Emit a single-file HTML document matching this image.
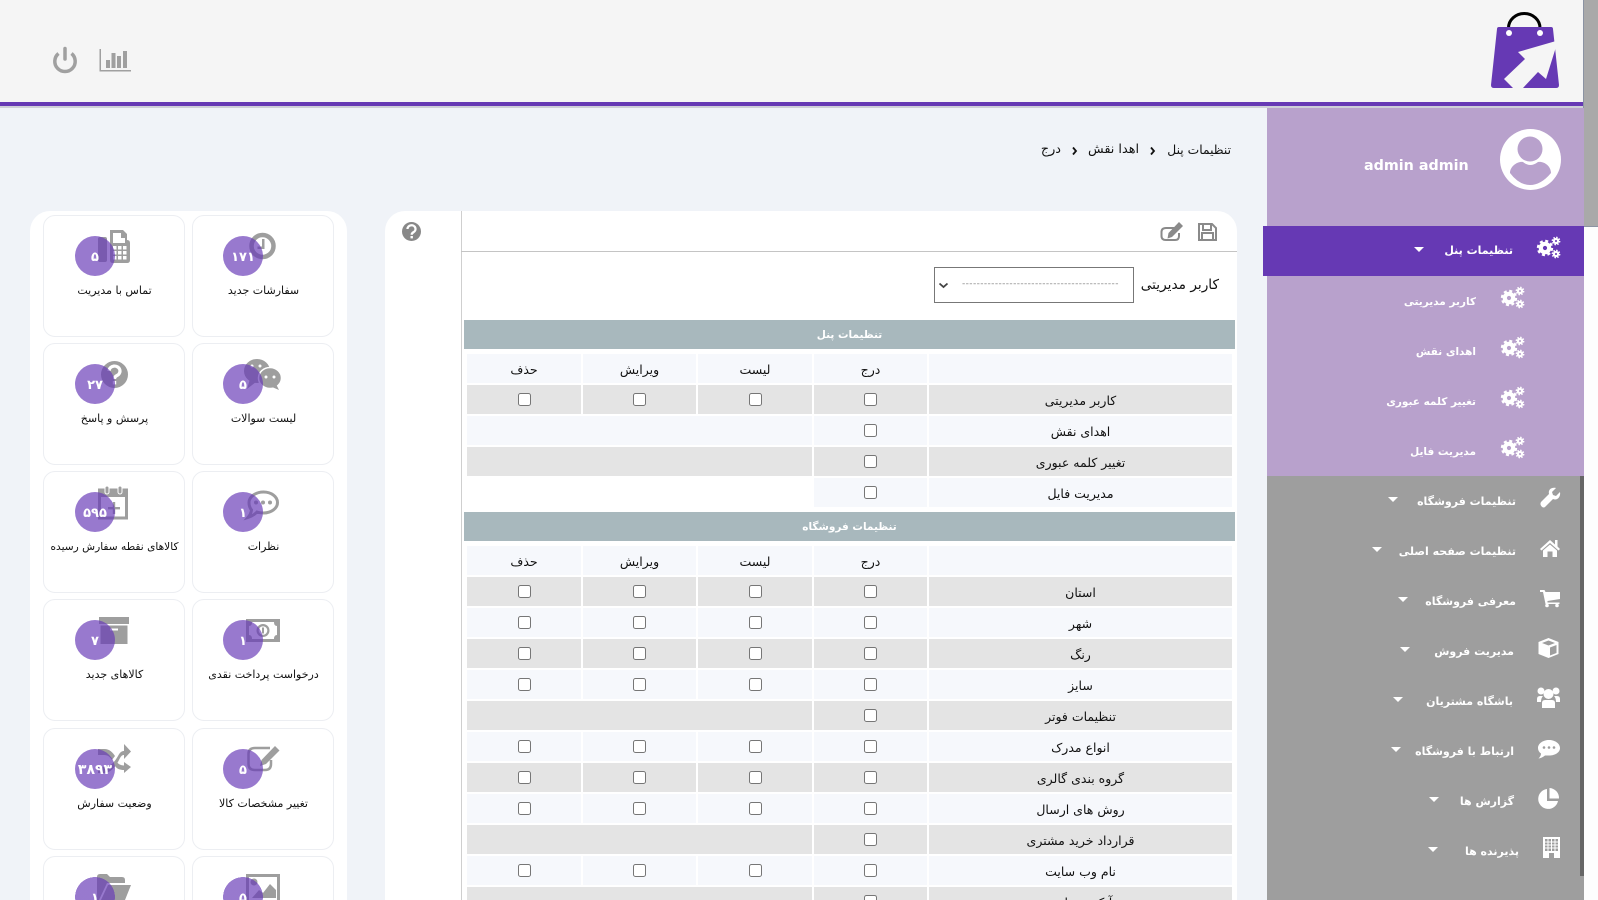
<!DOCTYPE html>
<html lang="fa">
<head>
<meta charset="utf-8">
<title>تنظیمات پنل</title>
<style>
*{box-sizing:border-box}
html,body{margin:0;padding:0;width:1598px;height:900px;overflow:hidden;background:#f0f3f8;font-family:"DejaVu Sans","Liberation Sans",sans-serif;color:#111}
#w{position:relative;width:1598px;height:900px;overflow:hidden;background:#f0f3f8}
.a{position:absolute}
.t{position:absolute;white-space:nowrap;direction:rtl;line-height:20px}
.m{color:#fff;font-size:11px;font-weight:bold;margin-top:1px}
.s{color:#fff;font-size:10.5px;font-weight:bold}
.car{position:absolute;width:0;height:0;border-left:5px solid transparent;border-right:5px solid transparent;border-top:5px solid #fff}
.card{position:absolute;width:142px;height:122px;background:#fff;border:1px solid #eceef2;border-radius:12px;text-align:center;font-size:11px;line-height:20px;padding:65px 0 0 1px;direction:rtl;white-space:nowrap}
.cb{height:44px;border-bottom:0;border-radius:12px 12px 0 0;padding:0}
.bd{position:absolute;width:40px;height:40px;border-radius:50%;background:rgba(103,58,183,.68);color:#fff;text-align:center;line-height:43px;font-size:13px;font-weight:bold;letter-spacing:1.5px}
.bc{height:23px;overflow:hidden;border-radius:0;background:radial-gradient(circle 20px at 20px 20px,rgba(103,58,183,.68) 99%,transparent 100%)}
.sec{position:absolute;left:464px;width:771px;height:29px;background:#a8b8bd;color:#fff;text-align:center;font-size:10.5px;line-height:31px;font-weight:bold;direction:rtl}
table{position:absolute;left:465px;border-collapse:separate;border-spacing:2px;table-layout:fixed;width:769px}
td{height:29px;padding:3px 0 0;text-align:center;font-size:12.5px;background:#f6f8fc;color:#111;line-height:1}
tr.g td{background:#e4e4e4}
td.w,tr.g td.w{background:#fff}
input{margin:0;width:13px;height:13px;vertical-align:middle;display:inline-block;position:relative;top:-1.5px}
.l{position:absolute;top:887px;height:13px;background:#e4e4e4;overflow:hidden}
</style>
</head>
<body>
<div id="w">

<!-- header -->
<div class="a" style="left:0;top:0;width:1584px;height:102px;background:#f5f5f5"></div>
<div class="a" style="left:0;top:102px;width:1584px;height:4px;background:#6639b4"></div>
<div class="a" style="left:0;top:106px;width:1584px;height:2px;background:#cfcfd8"></div>

<!-- scrollbar -->
<div class="a" style="left:1584px;top:0;width:14px;height:900px;background:#fdfdfd"></div>
<div class="a" style="left:1583px;top:0;width:15px;height:227px;background:#a9a9a9;border-left:1px solid #8b93a3;border-bottom:1px solid #8b93a3"></div>

<!-- sidebar -->
<div class="a" style="left:1267px;top:108px;width:317px;height:368px;background:#b8a1cc"></div>
<div class="a" style="left:1267px;top:476px;width:317px;height:424px;background:#9e9e9e"></div>
<div class="a" style="left:1580px;top:476px;width:4px;height:400px;background:#666"></div>
<div class="a" style="left:1263px;top:226px;width:321px;height:50px;background:#6639b4"></div>

<div class="t" style="left:1364px;top:156px;color:#fff;font-size:14.3px;font-weight:bold;direction:ltr">admin admin</div>

<div class="t m" style="right:85px;top:240px">تنظیمات پنل</div><div class="car" style="left:1414px;top:247px"></div>
<div class="t s" style="right:122px;top:292px">کاربر مدیریتی</div>
<div class="t s" style="right:122px;top:342px">اهدای نقش</div>
<div class="t s" style="right:122px;top:392px">تغییر کلمه عبوری</div>
<div class="t s" style="right:122px;top:442px">مدیریت فایل</div>

<div class="t m" style="right:82px;top:491px">تنظیمات فروشگاه</div><div class="car" style="left:1388px;top:497px"></div>
<div class="t m" style="right:82px;top:541px">تنظیمات صفحه اصلی</div><div class="car" style="left:1372px;top:547px"></div>
<div class="t m" style="right:82px;top:591px">معرفی فروشگاه</div><div class="car" style="left:1398px;top:597px"></div>
<div class="t m" style="right:84px;top:641px">مدیریت فروش</div><div class="car" style="left:1400px;top:647px"></div>
<div class="t m" style="right:85px;top:691px">باشگاه مشتریان</div><div class="car" style="left:1393px;top:697px"></div>
<div class="t m" style="right:84px;top:741px">ارتباط با فروشگاه</div><div class="car" style="left:1391px;top:747px"></div>
<div class="t m" style="right:84px;top:791px">گزارش ها</div><div class="car" style="left:1429px;top:797px"></div>
<div class="t m" style="right:79px;top:841px">پذیرنده ها</div><div class="car" style="left:1428px;top:847px"></div>

<!-- breadcrumb -->
<div class="t" style="right:367px;top:140px;font-size:12.3px">تنظیمات پنل</div>
<div class="t" style="right:459px;top:140px;font-size:12.8px">اهدا نقش</div>
<div class="t" style="right:537px;top:140px;font-size:12.8px">درج</div>

<!-- left cards panel -->
<div class="a" style="left:30px;top:211px;width:317px;height:689px;background:#fff;border-radius:20px 20px 0 0"></div>
<div class="card" style="left:192px;top:215px">سفارشات جدید</div>
<div class="card" style="left:43px;top:215px">تماس با مدیریت</div>
<div class="card" style="left:192px;top:343px">لیست سوالات</div>
<div class="card" style="left:43px;top:343px">پرسش و پاسخ</div>
<div class="card" style="left:192px;top:471px">نظرات</div>
<div class="card" style="left:43px;top:471px;font-size:10.6px">کالاهای نقطه سفارش رسیده</div>
<div class="card" style="left:192px;top:599px">درخواست پرداخت نقدی</div>
<div class="card" style="left:43px;top:599px">کالاهای جدید</div>
<div class="card" style="left:192px;top:728px">تغییر مشخصات کالا</div>
<div class="card" style="left:43px;top:728px">وضعیت سفارش</div>
<div class="card cb" style="left:192px;top:856px"></div>
<div class="card cb" style="left:43px;top:856px"></div>

<!-- main panel -->
<div class="a" style="left:385px;top:211px;width:852px;height:689px;background:#fff;border-radius:20px 20px 0 0"></div>
<div class="a" style="left:461px;top:211px;width:1px;height:689px;background:#cfcfcf"></div>
<div class="a" style="left:461px;top:251px;width:776px;height:1px;background:#c4c4c4"></div>

<div class="t" style="right:379px;top:275px;font-size:13.7px">کاربر مدیریتی</div>
<div class="a" style="left:934px;top:267px;width:200px;height:36px;border:1px solid #777;background:#fff"></div>
<div class="a" style="left:962px;top:277px;width:157px;height:14px;overflow:hidden;color:#888;font-size:9px;line-height:14px;letter-spacing:.4px;white-space:nowrap">-------------------------------------------</div>

<div class="sec" style="top:320px">تنظیمات پنل</div>
<table style="top:352px">
<colgroup><col style="width:114px"><col style="width:113px"><col style="width:114px"><col style="width:113px"><col></colgroup>
<tr><td>حذف</td><td>ویرایش</td><td>لیست</td><td>درج</td><td></td></tr>
<tr class="g"><td><input type="checkbox"></td><td><input type="checkbox"></td><td><input type="checkbox"></td><td><input type="checkbox"></td><td>کاربر مدیریتی</td></tr>
<tr><td colspan="3"></td><td><input type="checkbox"></td><td>اهدای نقش</td></tr>
<tr class="g"><td colspan="3"></td><td><input type="checkbox"></td><td>تغییر کلمه عبوری</td></tr>
<tr><td colspan="3" class="w"></td><td><input type="checkbox"></td><td>مدیریت فایل</td></tr>
</table>

<div class="sec" style="top:512px">تنظیمات فروشگاه</div>
<table style="top:544px">
<colgroup><col style="width:114px"><col style="width:113px"><col style="width:114px"><col style="width:113px"><col></colgroup>
<tr><td>حذف</td><td>ویرایش</td><td>لیست</td><td>درج</td><td></td></tr>
<tr class="g"><td><input type="checkbox"></td><td><input type="checkbox"></td><td><input type="checkbox"></td><td><input type="checkbox"></td><td>استان</td></tr>
<tr><td><input type="checkbox"></td><td><input type="checkbox"></td><td><input type="checkbox"></td><td><input type="checkbox"></td><td>شهر</td></tr>
<tr class="g"><td><input type="checkbox"></td><td><input type="checkbox"></td><td><input type="checkbox"></td><td><input type="checkbox"></td><td>رنگ</td></tr>
<tr><td><input type="checkbox"></td><td><input type="checkbox"></td><td><input type="checkbox"></td><td><input type="checkbox"></td><td>سایز</td></tr>
<tr class="g"><td colspan="3"></td><td><input type="checkbox"></td><td>تنظیمات فوتر</td></tr>
<tr><td><input type="checkbox"></td><td><input type="checkbox"></td><td><input type="checkbox"></td><td><input type="checkbox"></td><td>انواع مدرک</td></tr>
<tr class="g"><td><input type="checkbox"></td><td><input type="checkbox"></td><td><input type="checkbox"></td><td><input type="checkbox"></td><td>گروه بندی گالری</td></tr>
<tr><td><input type="checkbox"></td><td><input type="checkbox"></td><td><input type="checkbox"></td><td><input type="checkbox"></td><td>روش های ارسال</td></tr>
<tr class="g"><td colspan="3"></td><td><input type="checkbox"></td><td>قرارداد خرید مشتری</td></tr>
<tr><td><input type="checkbox"></td><td><input type="checkbox"></td><td><input type="checkbox"></td><td><input type="checkbox"></td><td>نام وب سایت</td></tr>
</table>
<!-- last, partly visible row -->
<div class="l" style="left:467px;width:345px"></div>
<div class="l" style="left:814px;width:113px"></div>
<div class="a" style="left:864px;top:895px;width:13px;height:5px;background:#fff;border:1px solid #767676;border-bottom:0;border-radius:2.5px 2.5px 0 0"></div>
<div class="l" style="left:929px;width:303px;text-align:center;font-size:12.5px;line-height:32px;direction:rtl;color:#111">آیکون سایت</div>

<!-- all icons, in page coordinates -->
<svg class="a" style="left:0;top:0;pointer-events:none" width="1598" height="900" viewBox="0 0 1598 900">
<defs>
<symbol id="g" viewBox="0 0 23 21" overflow="visible">
<g fill="none" stroke="#fff">
<circle cx="8" cy="11" r="4.2" stroke-width="4.200"/>
<circle cx="8" cy="11" r="6.800" stroke-width="2.800" stroke-dasharray="2.900 2.440"/>
<circle cx="19" cy="4" r="2.100" stroke-width="2.100"/>
<circle cx="19" cy="4" r="3.600" stroke-width="1.600" stroke-dasharray="1.500 1.330"/>
<circle cx="19" cy="17" r="2.100" stroke-width="2.100"/>
<circle cx="19" cy="17" r="3.600" stroke-width="1.600" stroke-dasharray="1.500 1.330"/>
</g>
</symbol>
</defs>

<!-- logo -->
<path d="M1508.500 33V28a15.750 14.500 0 0 1 31.500 0V33" fill="none" stroke="#000" stroke-width="3"/>
<path d="M1499 27H1551Q1553 27 1553 29L1559 85Q1559 88 1556 88H1494Q1491 88 1491 85L1497 29Q1497 27 1499 27Z" fill="#6639b4"/>
<circle cx="1509" cy="33" r="3" fill="#fff"/><circle cx="1540" cy="33" r="3" fill="#fff"/>
<path d="M1556 41L1518 52L1525 59L1504 79L1513 88H1523L1538 72L1546 79L1556 47Z" fill="#f5f5f5"/>

<!-- power / chart -->
<g fill="none" stroke="#a0a0a0" stroke-width="3.500">
<path d="M58.500 53.500A10.200 10.200 0 1 0 71.500 53.500"/>
<path d="M65 48.500V59" stroke-linecap="round"/>
</g>
<g fill="#a0a0a0">
<path d="M99.500 49h1.500v21h30v1.500h-31.500z"/>
<rect x="106" y="60" width="4" height="8"/><rect x="111.500" y="53" width="4" height="15"/><rect x="117" y="56" width="4" height="12"/><rect x="123" y="51" width="4" height="17"/>
</g>

<!-- user avatar -->
<circle cx="1530.500" cy="159.500" r="30.500" fill="#fff"/>
<circle cx="1530" cy="149" r="12.500" fill="#b8a1cc"/>
<path d="M1510 173C1510 166 1518 161 1523 162Q1530 168 1538 162C1544 161 1551 166 1551 173Q1541 185 1530 185Q1519 185 1510 173Z" fill="#b8a1cc"/>

<!-- gears -->
<use href="#g" x="1537" y="237" width="23" height="21"/>
<use href="#g" x="1501" y="287" width="23" height="21"/>
<use href="#g" x="1501" y="337" width="23" height="21"/>
<use href="#g" x="1501" y="387" width="23" height="21"/>
<use href="#g" x="1501" y="437" width="23" height="21"/>

<!-- sidebar icons -->
<g fill="#fff">
<path d="M1541 502L1549 494C1548 490 1551 487 1556 488L1552 492L1553 495L1556 496L1560 492C1561 497 1557 501 1553 499L1545 507C1543 509 1539 505 1541 502Z"/>
<path d="M1550 540L1555 544.500V540H1557.500V546.500L1560 549L1558.500 550.500L1550 543L1541.500 550.500L1540 549Z"/>
<path d="M1543 550.500L1550 544.500L1557 550.500V557H1552.500V551.500H1547.500V557H1543Z"/>
<path d="M1540 590H1544.500L1545.500 592H1560V599L1547.500 601V602.500H1559.500V604H1545.500L1543 592H1540Z"/>
<circle cx="1547" cy="605.500" r="1.800"/><circle cx="1557" cy="605.500" r="1.800"/>
<path d="M1548.500 638L1558.500 642V654L1548.500 658L1538.500 654V642Z"/>
<path d="M1548.500 640.500L1555 643L1548.500 645.500L1542 643ZM1550 647.500L1556.500 645V653L1550 655.500Z" fill="#9e9e9e"/>
<circle cx="1541" cy="691" r="3.500"/><circle cx="1556" cy="691" r="3.500"/><circle cx="1548.500" cy="694" r="5"/>
<path d="M1537 704V699Q1537 696 1540 696H1543Q1541 698 1541 702H1537ZM1560 704V699Q1560 696 1557 696H1554Q1556 698 1556 702H1560Z"/>
<path d="M1542 708V703Q1542 700 1545 700H1552Q1555 700 1555 703V708Z"/>
<path d="M1549 740C1555 740 1560 743.500 1560 748C1560 752.500 1555 755.500 1549 755.500L1545 755.500Q1542 758 1538.500 758.500Q1541 756 1541 753.500Q1538 751.500 1538 748C1538 743.500 1543 740 1549 740Z"/>
<path d="M1547 789A10 10 0 1 0 1558 801H1547Z"/>
<path d="M1549.500 788A10 10 0 0 1 1559 798.500L1549.500 798.500Z"/>
<rect x="1543" y="837" width="17" height="21"/>
</g>
<g fill="#9e9e9e">
<circle cx="1544" cy="747.500" r="1.300"/><circle cx="1549" cy="747.500" r="1.300"/><circle cx="1554" cy="747.500" r="1.300"/>
<path d="M1545 839h13v12h-13z"/>
<path d="M1549 853h5v5h-5z"/>
</g>
<g stroke="#fff" stroke-width="1" fill="none">
<path d="M1545 842H1558M1545 845H1558M1545 848H1558M1548 839V851M1551.500 839V851M1555 839V851"/>
<path d="M1544 852H1559" stroke-width="1"/>
</g>

<!-- toolbar + help -->
<g fill="none" stroke="#8a8a8a" stroke-width="2">
<path d="M1199 224H1212L1216 228V240H1199Z"/>
<path d="M1203 224V230H1211V224M1202 240V233H1213V240"/>
<path d="M1177 228H1166Q1161.500 228 1161.500 232V236Q1161.500 240 1166 240H1175Q1179 240 1179 236V233"/>
</g>
<path d="M1179 222L1183 226L1172 237L1167.500 238.500L1168.500 233Z" fill="#8a8a8a"/>
<circle cx="411.500" cy="231.500" r="9.500" fill="#888"/>
<path d="M407.500 229a4 3.700 0 1 1 6 3.200q-1.800 1-1.800 2.600" fill="none" stroke="#fff" stroke-width="2.300"/>
<rect x="410.500" y="236" width="2.400" height="2.400" fill="#fff"/>

<!-- chevrons -->
<g fill="none" stroke="#111" stroke-width="1.800">
<path d="M1151 147.500L1154 151L1151 154.500"/>
<path d="M1073 147.500L1076 151L1073 154.500"/>
</g>
<path d="M939.500 283.500L943.500 287L947.500 283.500" fill="none" stroke="#444" stroke-width="1.800"/>

<!-- card icons -->
<g fill="#9e9e9e">
<circle cx="262.500" cy="246" r="11" fill="none" stroke="#9e9e9e" stroke-width="4.500"/>
<path d="M262 239h2.500v10h-7v-2.500h4.500z"/>

<rect x="98" y="237" width="9" height="25" rx="2"/>
<path d="M110 230H123L127 234V240Q130 240 130 243V260Q130 263 127 263H113Q110 263 110 260Z"/>
<path d="M113 233H121V238H125V243H113Z" fill="#fff"/>
<path d="M113 246h3.500v3.500H113zM118 246h3.500v3.500H118zM123 246h3.500v3.500H123zM113 251h3.500v3.500H113zM118 251h3.500v3.500H118zM123 251h3.500v3.500H123zM113 256h3.500v3.500H113zM118 256h3.500v3.500H118zM123 256h3.500v3.500H123z" fill="#fff"/>

<ellipse cx="257" cy="371" rx="13" ry="12"/>
<path d="M250 379L247 389L256 382Z"/>
<ellipse cx="270" cy="378" rx="11.500" ry="10.500" stroke="#fff" stroke-width="1.500"/>
<path d="M272 387L279 390L276 384Z"/>
<circle cx="266" cy="377" r="1.500" fill="#fff"/><circle cx="274" cy="377" r="1.500" fill="#fff"/>
<circle cx="252" cy="366" r="1.500" fill="#fff"/><circle cx="260" cy="366" r="1.500" fill="#fff"/>

<circle cx="114.500" cy="374.500" r="13.500"/>
<path d="M109 371a5.500 5 0 1 1 8 4.500q-2.500 1.200-2.500 3.500" fill="none" stroke="#fff" stroke-width="3.200"/>
<rect x="112.800" y="381" width="3.400" height="3.400" fill="#fff"/>

<path d="M263.500 492C271 492 277.500 496.500 277.500 502.500C277.500 508.500 271 513 263.500 513Q260 513 257 512Q253 516 248 517.500Q251 514 251.500 510Q249 507 249 502.500C249 496.500 256 492 263.500 492Z" fill="none" stroke="#9e9e9e" stroke-width="3"/>
<circle cx="263" cy="502.500" r="2"/><circle cx="270" cy="502.500" r="2"/><circle cx="256" cy="502.500" r="2"/>

<rect x="99.500" y="490" width="27" height="28" fill="none" stroke="#9e9e9e" stroke-width="3"/>
<rect x="99" y="490" width="28" height="7"/>
<rect x="105" y="486" width="4" height="8" rx="2" stroke="#fff"/>
<rect x="118" y="486" width="4" height="8" rx="2" stroke="#fff"/>
<path d="M108 507h12v2.400h-12zM112.800 502h2.400v12h-2.400z"/>

<rect x="246" y="619" width="34" height="23"/>
<path d="M252 622H274Q274 626 277 626V635Q274 635 274 639H252Q252 635 249 635V626Q252 626 252 622Z" fill="#fff"/>
<circle cx="263" cy="630.500" r="6.500"/>
<circle cx="263" cy="630.500" r="4.300" fill="#fff"/>
<path d="M262 627.500h2v6h-2z"/>

<rect x="99" y="617" width="30" height="7"/>
<path d="M100.500 625.500H127.500V644H100.500Z"/>
<rect x="110" y="628.500" width="8" height="2" fill="#fff"/>

<path d="M270 748H255Q248.500 748 248.500 754V764Q248.500 770 255 770H265Q271 770 271 764V760" fill="none" stroke="#9e9e9e" stroke-width="2.500"/>
<path d="M275 746L279.500 750.500L266 764L260 766L261.500 760Z"/>

<path d="M98 749H104C110 749 113 753 115 756L112 760C110 757 108 755 104 755H98ZM98 767H104C110 767 114 763 118 756C120 752 122 751 124 751V744L131 751.500L124 759V755C122 755 121 756 119 760C116 766 111 773 104 773H98ZM117 762C118 764 121 765.500 124 765.500V762L131 767L124 773V770C120 770 117 769 115 766Z"/>

<path d="M246 874H280V900H277V877H249V900H246Z"/>
<circle cx="254" cy="882" r="3.500"/>
<path d="M252 898L259 890L263 893L270 884L276 890V898Z"/>

<path d="M97 900V877Q97 874 100 874H107L110 877H122Q125 877 125 880V883H107L99 900Z"/>
<path d="M101 900L108 885H131L125 900Z"/>
</g>
</svg>

<!-- badges -->
<div class="bd" style="left:223px;top:236px">۱۷۱</div>
<div class="bd" style="left:75px;top:236px">۵</div>
<div class="bd" style="left:223px;top:364px">۵</div>
<div class="bd" style="left:75px;top:364px">۲۷</div>
<div class="bd" style="left:223px;top:492px">۱</div>
<div class="bd" style="left:75px;top:492px">۵۹۵</div>
<div class="bd" style="left:223px;top:620px">۱</div>
<div class="bd" style="left:75px;top:620px">۷</div>
<div class="bd" style="left:223px;top:749px">۵</div>
<div class="bd" style="left:75px;top:749px;font-size:14px">۳۸۹۳</div>
<div class="bd bc" style="left:223px;top:877px">۵</div>
<div class="bd bc" style="left:75px;top:877px">۱</div>

</div>
</body>
</html>
